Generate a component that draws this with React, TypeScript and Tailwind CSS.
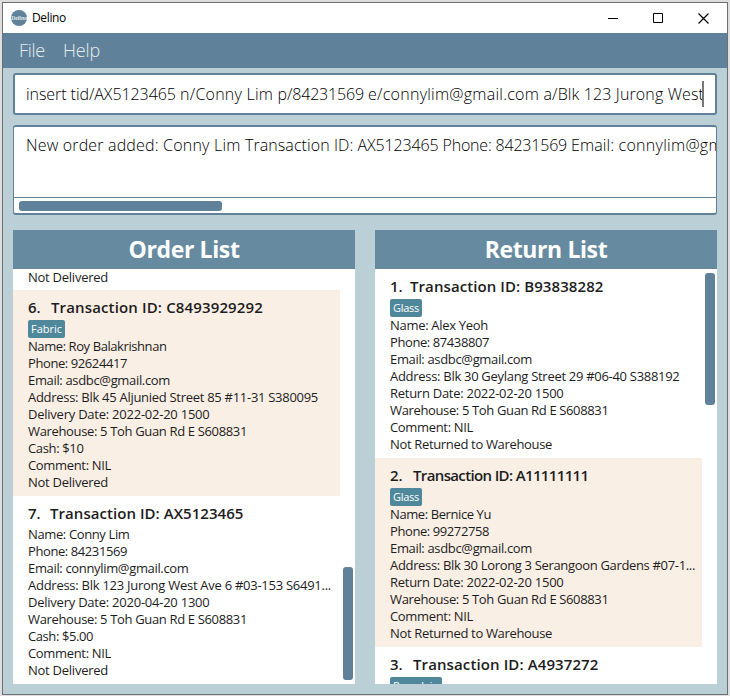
import { useLayoutEffect, useRef, useState } from "react";

// A single line of text whose tracking is adjusted to fill a given width.
function Line({ text, width, className = "" }: { text: string; width: number; className?: string }) {
  const ref = useRef<HTMLSpanElement>(null);
  const [spacing, setSpacing] = useState(0);
  useLayoutEffect(() => {
    if (ref.current) {
      setSpacing((width - ref.current.getBoundingClientRect().width) / text.length);
    }
  }, []);
  return (
    <span ref={ref} className={"block w-max shrink-0 whitespace-pre " + className} style={{ letterSpacing: spacing + "px" }}>
      {text}
    </span>
  );
}

type Row = [string, number];
type Entry = { no: string; noWidth: number; id: string; idWidth: number; tag?: string; tagWidth?: number; rows: Row[] };

const command: Row[] = [
  ["insert tid/AX5123465 ", 154],
  ["n/Conny Lim ", 97.5],
  ["p/84231569 ", 90.5],
  ["e/connylim@gmail.com ", 175.5],
  ["a/Blk 123 Jurong West", 160.5],
];

const result: Row[] = [
  ["New order added: ", 137],
  ["Conny Lim ", 82],
  ["Transaction ID: ", 112.5],
  ["AX5123465 ", 85],
  ["Phone: 84231569 ", 128.5],
  ["Email: ", 47.5],
  ["connylim@gmail.com", 157],
];

const orders: Entry[] = [
  {
    no: "6.", noWidth: 23, id: "Transaction ID: C8493929292", idWidth: 212, tag: "Fabric", tagWidth: 31,
    rows: [
      ["Name: Roy Balakrishnan", 138.5],
      ["Phone: 92624417", 99],
      ["Email: asdbc@gmail.com", 142],
      ["Address: Blk 45 Aljunied Street 85 #11-31 S380095", 290],
      ["Delivery Date: 2022-02-20 1500", 181.5],
      ["Warehouse: 5 Toh Guan Rd E S608831", 219],
      ["Cash: $10", 55.5],
      ["Comment: NIL", 83],
      ["Not Delivered", 80],
    ],
  },
  {
    no: "7.", noWidth: 22, id: "Transaction ID: AX5123465", idWidth: 193.5,
    rows: [
      ["Name: Conny Lim", 101.5],
      ["Phone: 84231569", 99],
      ["Email: connylim@gmail.com", 160.5],
      ["Address: Blk 123 Jurong West Ave 6 #03-153 S6491...", 303],
      ["Delivery Date: 2020-04-20 1300", 181.5],
      ["Warehouse: 5 Toh Guan Rd E S608831", 219],
      ["Cash: $5.00", 65],
      ["Comment: NIL", 83],
      ["Not Delivered", 80],
    ],
  },
];

const returns: Entry[] = [
  {
    no: "1.", noWidth: 20, id: "Transaction ID: B93838282", idWidth: 193.5, tag: "Glass", tagWidth: 26,
    rows: [
      ["Name: Alex Yeoh", 98],
      ["Phone: 87438807", 99],
      ["Email: asdbc@gmail.com", 142],
      ["Address: Blk 30 Geylang Street 29 #06-40 S388192", 289.5],
      ["Return Date: 2022-02-20 1500", 173.5],
      ["Warehouse: 5 Toh Guan Rd E S608831", 218.5],
      ["Comment: NIL", 83],
      ["Not Returned to Warehouse", 162],
    ],
  },
  {
    no: "2.", noWidth: 23, id: "Transaction ID: A11111111", idWidth: 175.5, tag: "Glass", tagWidth: 26,
    rows: [
      ["Name: Bernice Yu", 101],
      ["Phone: 99272758", 99],
      ["Email: asdbc@gmail.com", 142],
      ["Address: Blk 30 Lorong 3 Serangoon Gardens #07-1...", 305],
      ["Return Date: 2022-02-20 1500", 173.5],
      ["Warehouse: 5 Toh Guan Rd E S608831", 218.5],
      ["Comment: NIL", 83],
      ["Not Returned to Warehouse", 162],
    ],
  },
  { no: "3.", noWidth: 23, id: "Transaction ID: A4937272", idWidth: 185.5, tag: "Porcelain", tagWidth: 46, rows: [] },
];

function Card({ entry, shaded }: { entry: Entry; shaded: boolean }) {
  return (
    <div className={"w-[327px] shrink-0 py-[5px] pl-[15px] " + (shaded ? "bg-[#faefe5]" : "bg-white")}>
      <div className="flex h-[25px] text-[15px] font-semibold leading-[25px]">
        <span className="shrink-0" style={{ width: entry.noWidth }}>{entry.no}</span>
        <Line text={entry.id} width={entry.idWidth} />
      </div>
      {entry.tag && (
        <div className="h-[18px] w-max rounded-[2px] bg-[#4f879b] px-[3px] text-[11px] leading-[18px] text-white">
          <Line text={entry.tag} width={entry.tagWidth ?? 30} />
        </div>
      )}
      {entry.rows.map(([text, width]) => (
        <Line key={text} text={text} width={width} className="h-[17px] text-[13px] leading-[17px]" />
      ))}
    </div>
  );
}

function PanelHeader({ title, width }: { title: string; width: number }) {
  return (
    <div className="flex h-[39px] shrink-0 justify-center bg-[#668ba0] text-[23px] font-bold leading-[39px] text-white">
      <Line text={title} width={width} />
    </div>
  );
}

export default function App() {
  return (
    <div className="h-[696px] w-[730px] overflow-hidden bg-[#dedede] pl-[2px] pt-[2px] font-['Open_Sans','Noto_Sans',sans-serif] text-[#1d1d1d]">
      <div className="flex h-[693px] w-[726px] flex-col border border-[#6d7072] bg-[#bacfd6]">
        <div className="flex h-[30px] shrink-0 items-center bg-white pl-2">
          <svg className="h-4 w-4" viewBox="0 0 16 16">
            <circle cx="8" cy="8" r="8" fill="#5f829a" />
            <text x="8" y="10" textAnchor="middle" fontSize="5.8" fontStyle="italic" fontWeight="bold" fontFamily="Liberation Serif, serif" fill="#e8eff2">Delino</text>
          </svg>
          <Line text="Delino" width={34} className="ml-[5px] text-[12px] text-black" />
          <svg className="ml-auto mr-[18px] h-[11px] w-[102px]" viewBox="0 0 102 11" fill="none" stroke="#000" strokeWidth="1">
            <path d="M1 5.5h10" />
            <path d="M46.500 .5h9v9h-9z" />
            <path strokeWidth="1.2" d="M91.500 .5l10 10M101.500 .5l-10 10" />
          </svg>
        </div>
        <div className="flex h-[35px] shrink-0 bg-[#5f829a] pl-[16px] text-[18px] font-light leading-[35px] text-[#e5ecf0]">
          <Line text="File" width={26} />
          <Line text="Help" width={37} className="ml-[18px]" />
        </div>
        <div className="mx-[10px] mt-[5px] flex h-[42px] shrink-0 items-center rounded-[3px] border-2 border-[#5f829a] bg-white pl-[11px] text-[16px] font-light text-black">
          {command.map(([text, width]) => <Line key={text} text={text} width={width} />)}
          <span className="-ml-[2px] h-[26px] w-[2px] bg-[#777]" />
        </div>
        <div className="mx-[10px] mt-[10px] flex h-[90px] shrink-0 flex-col overflow-hidden rounded-[3px] border-2 border-x border-[#5f829a] bg-white text-black">
          <div className="flex h-[71px] shrink-0 overflow-hidden border-b border-[#5f829a] pl-[12px] pt-[6px] text-[16px] font-light leading-6">
            {result.map(([text, width]) => <Line key={text} text={text} width={width} />)}
          </div>
          <div className="ml-[5px] mt-[3px] h-[10px] w-[203px] shrink-0 rounded-[3px] bg-[#5f829a]" />
        </div>
        <div className="mx-[10px] mt-[15px] flex h-[454px] shrink-0 gap-5">
          <section className="flex w-[342px] flex-col bg-white">
            <PanelHeader title="Order List" width={111} />
            <div className="flex h-[415px] overflow-hidden">
              <div className="flex h-[415px] w-[327px] flex-col overflow-hidden">
                <div className="h-[21px] shrink-0 pl-[15px]">
                  <Line text="Not Delivered" width={80} className="text-[13px] leading-[16px]" />
                </div>
                {orders.map((e, i) => <Card key={e.no} entry={e} shaded={i === 0} />)}
              </div>
              <div className="ml-[3px] mt-[298px] h-[113px] w-[10px] rounded-[3px] bg-[#5f829a]" />
            </div>
          </section>
          <section className="flex w-[342px] flex-col bg-white">
            <PanelHeader title="Return List" width={122.5} />
            <div className="flex h-[415px] overflow-hidden">
              <div className="flex h-[415px] w-[327px] flex-col overflow-hidden">
                {returns.map((e, i) => <Card key={e.no} entry={e} shaded={i === 1} />)}
              </div>
              <div className="ml-[3px] mt-[4px] h-[132px] w-[10px] rounded-[3px] bg-[#5f829a]" />
            </div>
          </section>
        </div>
      </div>
    </div>
  );
}
